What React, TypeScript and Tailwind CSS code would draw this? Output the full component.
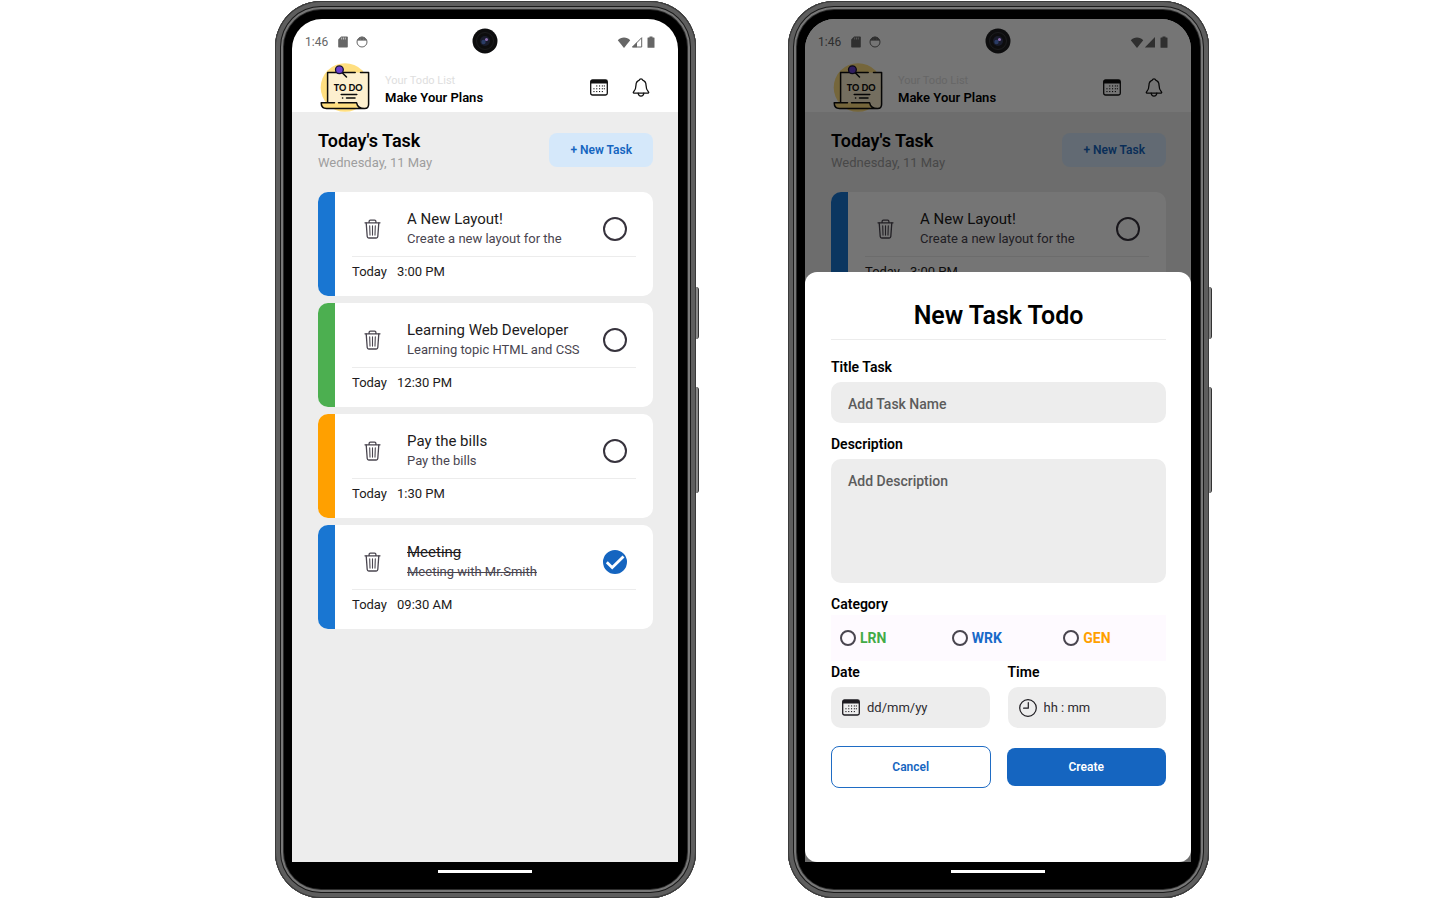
import React, { useState } from "react";

type Task = {
  title: string;
  detail: string;
  time: string;
  stripe: string;
  done: boolean;
};

const TASKS: Task[] = [
  { title: "A New Layout!", detail: "Create a new layout for the", time: "3:00 PM", stripe: "bg-[#1976d2]", done: false },
  { title: "Learning Web Developer", detail: "Learning topic HTML and CSS", time: "12:30 PM", stripe: "bg-[#4caf50]", done: false },
  { title: "Pay the bills", detail: "Pay the bills", time: "1:30 PM", stripe: "bg-[#ffa000]", done: false },
  { title: "Meeting", detail: "Meeting with Mr.Smith", time: "09:30 AM", stripe: "bg-[#1976d2]", done: true },
];

const CATEGORIES = [
  { code: "LRN", color: "text-[#43ab47]" },
  { code: "WRK", color: "text-[#1769c9]" },
  { code: "GEN", color: "text-[#ffa000]" },
];

function CalendarIcon({ className }: { className?: string }) {
  return (
    <svg viewBox="0 0 18 17" fill="none" className={className} aria-hidden="true">
      <rect x="0.7" y="1" width="16.6" height="15" rx="1.8" stroke="currentColor" strokeWidth="1.3" />
      <path d="M0.7 4.6V2.8A1.8 1.8 0 0 1 2.5 1h13a1.8 1.8 0 0 1 1.8 1.8v1.8z" fill="currentColor" />
      <g fill="currentColor">
        {[6.4, 9.2, 12].map((y) =>
          [3.6, 6.4, 9.2, 12, 14].map((x, i) =>
            (y < 7 && i === 0) || (y > 11 && i === 4) ? null : (
              <rect key={`${x}-${y}`} x={x - 0.2} y={y} width="1.1" height="1.1" />
            ),
          ),
        )}
      </g>
    </svg>
  );
}

function BellIcon() {
  return (
    <svg viewBox="0 0 18 19" fill="none" stroke="currentColor" strokeWidth="1.3" strokeLinecap="round" strokeLinejoin="round" className="h-[19px] w-[18px]" aria-hidden="true">
      <path d="M9 .8c-.9 0-1.500.5-1.700 1.300C5.300 2.900 4 4.600 4 7c0 3.600-.6 5.100-2.500 7-.4.400-.300 1.100.400 1.100h14.200c.7 0 .8-.7.4-1.100C14.600 12.100 14 10.600 14 7c0-2.400-1.300-4.100-3.300-4.900C10.500 1.300 9.900.8 9 .8z" />
      <path d="M6.200 15.200c.2 1.900 1.300 2.900 2.800 2.900s2.600-1 2.800-2.900" />
    </svg>
  );
}

function TrashIcon() {
  return (
    <svg viewBox="0 0 17 20" fill="none" stroke="currentColor" strokeWidth="1.3" strokeLinecap="round" strokeLinejoin="round" className="h-5 w-[17px]" aria-hidden="true">
      <path d="M1 3.800h15M5.100 3.600V2.500c0-.8.500-1.400 1.300-1.400h4.200c.8 0 1.300.6 1.300 1.400v1.100" />
      <path d="M2.200 3.900l1 13.600c.1 1 .6 1.500 1.500 1.500h7.600c.9 0 1.400-.5 1.500-1.500l1-13.600" />
      <path d="M5.700 6.700l.3 9.400M8.500 6.700v9.400M11.300 6.700l-.3 9.400" strokeWidth="1.1" />
    </svg>
  );
}

function ClockIcon() {
  return (
    <svg viewBox="0 0 18 18" fill="none" stroke="currentColor" strokeWidth="1.2" strokeLinecap="round" strokeLinejoin="round" className="size-[18px]" aria-hidden="true">
      <circle cx="9" cy="9" r="8.300" />
      <path d="M9.300 3.600v5.600H4.600" />
    </svg>
  );
}

function TodoLogo() {
  return (
    <svg viewBox="0 0 50 50" className="-mt-px size-[50px]" role="img" aria-label="To do">
      <circle cx="25" cy="25.500" r="24.300" fill="#ffdf80" />
      <path d="M7.600 10.400h41v31.800c0 2.500-1.500 4.300-4 4.300H7.600z" fill="#fdf0cf" />
      <path d="M1.200 40.800h35.300c.3 3.200 1.600 5.700 4.500 5.700H6.500c-3.200 0-5.300-2.200-5.300-5.700z" fill="#ffdf80" />
      <g fill="none" stroke="#0b0b0b" strokeWidth="1.500" strokeLinecap="round" strokeLinejoin="round">
        <path d="M7.600 40.500V10.400h27.600M40.500 10.400h8.100v31.800c0 2.500-1.500 4.300-4 4.300-4.800 0-7.300-1.900-8-5.700H18.500M14.500 40.800H1.200c0 3.500 2.100 5.700 5.300 5.700h38" />
        <path d="M21.200 32.400h15.600M26.500 36H35M22.500 36h.2" />
        <path d="M21.500 10l5 5" />
      </g>
      <circle cx="19.400" cy="7.800" r="3.900" fill="#6a3fd0" stroke="#15102e" strokeWidth="1.300" />
      <text x="28.200" y="29" textAnchor="middle" fontFamily="Lato, sans-serif" fontWeight="900" fontSize="9" fill="#0b0b0b">TO DO</text>
    </svg>
  );
}

function StatusBar({ fullSignal }: { fullSignal: boolean }) {
  return (
    <div className="flex h-11 items-center justify-between pt-0.5 pr-[23px] pl-[13px] text-[#666]">
      <div className="flex items-center">
        <span className="text-[12px] leading-4">1:46</span>
        <svg viewBox="0 0 10 12" className="ml-2.5 h-3 w-2.5" aria-hidden="true">
          <path d="M3.200.5H9a.8.800 0 0 1 .8.800v9.400a.8.800 0 0 1-.8.800H1a.8.800 0 0 1-.8-.8V3.500z" fill="currentColor" />
          <path d="M3.700 1.500v2M5.500 1.500v2M7.300 1.500v2" stroke="#fff" strokeWidth="0.600" />
        </svg>
        <svg viewBox="0 0 12 12" fill="none" stroke="currentColor" className="ml-2 size-3" aria-hidden="true">
          <circle cx="6" cy="6" r="5" strokeWidth="1" />
          <path d="M1.500 4.300h9L9 2 6 1 3 2z" fill="currentColor" strokeWidth="0.600" />
          <path d="M4 3.200h.2M7.800 3.200h.2" stroke="#fff" strokeWidth="1" />
        </svg>
      </div>
      <div className="flex items-center">
        <svg viewBox="0 0 14 11" className="h-[11px] w-3.5" aria-hidden="true">
          <path d="M7 11L.8 3.200C2.500 1.600 4.600.5 7 .5s4.500 1.100 6.200 2.700z" fill="currentColor" />
        </svg>
        <svg viewBox="0 0 12 12" className="size-3" aria-hidden="true">
          {fullSignal ? (
            <path d="M11 1v10.500H.8z" fill="currentColor" />
          ) : (
            <>
              <path d="M10.700 1.700v9.300H1.500z" fill="none" stroke="currentColor" strokeWidth="1" />
              <path d="M6 6.200v5H1z" fill="currentColor" />
            </>
          )}
        </svg>
        <svg viewBox="0 0 8 12" className="ml-1 h-3 w-2" aria-hidden="true">
          <path d="M2.500.5h3v1H7a.5.500 0 0 1 .5.500v9.200a.5.500 0 0 1-.5.500H1a.5.500 0 0 1-.5-.5V2a.5.500 0 0 1 .5-.5h1.500z" fill="currentColor" />
        </svg>
      </div>
    </div>
  );
}

function TaskCard({ task }: { task: Task }) {
  const [done, setDone] = useState(task.done);
  const strike = done ? "line-through decoration-1" : "";
  return (
    <li className="flex overflow-hidden rounded-[10px] bg-white">
      <div className={`w-[17px] shrink-0 ${task.stripe}`} />
      <div className="min-w-0 flex-1 px-[17px] pt-[17px] pb-3.5">
        <div className="flex items-center border-b border-[#ececec] pr-[9px] pb-2 pl-3">
          <button type="button" aria-label={`Delete ${task.title}`} className="text-[#49454f]">
            <TrashIcon />
          </button>
          <div className="ml-[26px] min-w-0 flex-1 whitespace-nowrap">
            <h3 className={`text-[15px] leading-5 text-[#1d1b20] ${strike}`}>{task.title}</h3>
            <p className={`text-[13px] leading-[19px] text-[#49454f] ${strike}`}>{task.detail}</p>
          </div>
          <label className="relative size-6 shrink-0">
            <input
              type="checkbox"
              checked={done}
              onChange={(e) => setDone(e.target.checked)}
              aria-label={`Mark ${task.title} as done`}
              className="block size-6 appearance-none rounded-full border-2 border-[#37333d] checked:border-[#1565c0] checked:bg-[#1565c0]"
            />
            {done && (
              <svg viewBox="0 0 24 24" className="pointer-events-none absolute inset-0 size-6" aria-hidden="true">
                <path d="M3.800 12.300l5.400 5.200L20.500 6.400" fill="none" stroke="#fff" strokeWidth="2.800" />
              </svg>
            )}
          </label>
        </div>
        <div className="flex gap-2.5 pt-[5px] text-[13px] leading-5 text-[#1d1b20]">
          <span>Today</span>
          <span>{task.time}</span>
        </div>
      </div>
    </li>
  );
}

function TaskScreen({ tasks, fullSignal }: { tasks: Task[]; fullSignal: boolean }) {
  return (
    <div className="flex flex-1 flex-col">
      <StatusBar fullSignal={fullSignal} />
      <header className="flex h-[49px] items-center pr-7 pl-7">
        <TodoLogo />
        <div className="ml-[15px] flex-1 pt-0.5">
          <p className="text-[11px] leading-[17px] text-[#dedede]">Your Todo List</p>
          <p className="text-[13px] leading-[17px] font-semibold text-black">Make Your Plans</p>
        </div>
        <button type="button" aria-label="Calendar" className="text-[#111]">
          <CalendarIcon className="h-[17px] w-[18px]" />
        </button>
        <button type="button" aria-label="Notifications" className="ml-6 text-[#111]">
          <BellIcon />
        </button>
      </header>
      <section className="flex-1 bg-[#ededed] pt-[18px] pr-[25px] pl-[26px]">
        <div className="flex items-start justify-between">
          <div>
            <h2 className="text-[18px] leading-[22px] font-semibold text-black">Today's Task</h2>
            <p className="text-[13px] leading-[21px] text-[#9e9e9e]">Wednesday, 11 May</p>
          </div>
          <button type="button" className="mt-[3px] h-[34px] rounded-lg bg-[#d5e8fa] px-[21px] text-[12px] font-semibold text-[#1565c0]">
            + New Task
          </button>
        </div>
        <ul className="mt-[19px] flex flex-col gap-[7px]">
          {tasks.map((task) => (
            <TaskCard key={task.title} task={task} />
          ))}
        </ul>
      </section>
    </div>
  );
}

const LABEL = "block text-[14px] leading-5 font-semibold text-black";
const FIELD = "block w-full rounded-[10px] bg-[#ededed] px-[17px] text-[14px] font-medium text-black placeholder:text-[#5c5c5c]";
const PICKER = "mt-[5px] flex h-[41px] items-center rounded-[10px] bg-[#ededed] pl-[11px] text-[#1d1b20]";
const PICKER_INPUT = "ml-[7px] w-full min-w-0 bg-transparent text-[13px] placeholder:text-[#2d2b30]";

function NewTaskSheet() {
  return (
    <form
      onSubmit={(e) => e.preventDefault()}
      className="absolute inset-x-0 bottom-0 rounded-xl bg-white pt-7 pr-[25px] pb-[74px] pl-[26px]"
    >
      <h2 className="border-b border-[#ececec] pb-[7px] text-center text-[25px] leading-8 font-semibold text-black">New Task Todo</h2>

      <label htmlFor="task-title" className={`mt-[17px] ${LABEL}`}>Title Task</label>
      <input id="task-title" placeholder="Add Task Name" className={`mt-[5px] h-[41px] pt-0.5 ${FIELD}`} />

      <label htmlFor="task-description" className={`mt-[11px] ${LABEL}`}>Description</label>
      <textarea id="task-description" placeholder="Add Description" className={`mt-[5px] h-[124px] resize-none pt-3 leading-5 ${FIELD}`} />

      <fieldset className="mt-[11px]">
        <legend className={LABEL}>Category</legend>
        <div className="mt-px grid h-[46px] grid-cols-3 items-center bg-[#fefaff]">
          {CATEGORIES.map(({ code, color }) => (
            <label key={code} className={`flex items-center gap-1 pl-[9px] text-[14px] leading-5 font-bold ${color}`}>
              <input
                type="radio"
                name="category"
                value={code}
                className="size-4 appearance-none rounded-full border-2 border-[#49454f] checked:border-[5px]"
              />
              {code}
            </label>
          ))}
        </div>
      </fieldset>

      <div className="mt-px grid grid-cols-2 gap-[18px]">
        <div>
          <label htmlFor="task-date" className={LABEL}>Date</label>
          <div className={PICKER}>
            <CalendarIcon className="h-[17px] w-[18px] shrink-0" />
            <input id="task-date" placeholder="dd/mm/yy" className={PICKER_INPUT} />
          </div>
        </div>
        <div>
          <label htmlFor="task-time" className={LABEL}>Time</label>
          <div className={PICKER}>
            <span className="shrink-0"><ClockIcon /></span>
            <input id="task-time" placeholder="hh : mm" className={PICKER_INPUT} />
          </div>
        </div>
      </div>

      <div className="mt-[18px] grid grid-cols-2 items-center gap-4">
        <button type="button" className="h-[42px] rounded-lg border border-[#1f6cc4] bg-white text-[12px] font-semibold text-[#1565c0]">Cancel</button>
        <button type="submit" className="h-[38px] rounded-lg bg-[#1565c0] text-[12px] font-semibold text-white">Create</button>
      </div>
    </form>
  );
}

function Phone({ children }: { children: React.ReactNode }) {
  return (
    <div className="relative flex w-full max-w-[421px] flex-col rounded-[46px] bg-black pt-[18px] pr-[18px] pl-[17px] shadow-[inset_0_0_0_1px_#3a3a3a,inset_0_0_0_5px_#5e5e5e,inset_0_0_0_6px_#1a1a1a,inset_0_0_0_8px_#777,inset_0_0_0_9px_#2e2e2e]">
      {/* Side keys */}
      <div className="absolute top-[286px] -right-[3px] h-[52px] w-[3px] rounded-r-sm border-r border-[#333] bg-[#8a8a8a]" />
      <div className="absolute top-[386px] -right-[3px] h-[106px] w-[3px] rounded-r-sm border-r border-[#333] bg-[#8a8a8a]" />

      <div className="relative flex flex-1 flex-col overflow-hidden rounded-t-[30px] bg-white">
        {children}
        {/* Front camera */}
        <svg viewBox="0 0 26 26" className="absolute top-[9px] left-1/2 size-[26px] -translate-x-1/2" aria-hidden="true">
          <circle cx="13" cy="13" r="12.500" fill="#0d0d0e" />
          <circle cx="13" cy="13" r="8.500" fill="none" stroke="#1c1c1e" strokeWidth="1" />
          <circle cx="13" cy="13" r="5" fill="#191c2c" />
          <circle cx="11.500" cy="14" r="2.200" fill="#2a3c66" />
          <circle cx="14.500" cy="11.500" r="1.500" fill="#8b6bb0" />
        </svg>
      </div>

      <div className="flex h-9 items-start justify-center pt-2">
        <div className="h-[3px] w-[94px] bg-white" />
      </div>
    </div>
  );
}

export default function App() {
  return (
    <main className="flex min-h-screen justify-center gap-[92px] bg-white pt-px pb-0.5 pl-11 font-['Roboto',sans-serif]">
      <Phone>
        <TaskScreen tasks={TASKS} fullSignal={false} />
      </Phone>
      <Phone>
        <TaskScreen tasks={TASKS.slice(0, 1)} fullSignal />
        <div className="absolute inset-0 bg-black/54" />
        <NewTaskSheet />
      </Phone>
    </main>
  );
}
